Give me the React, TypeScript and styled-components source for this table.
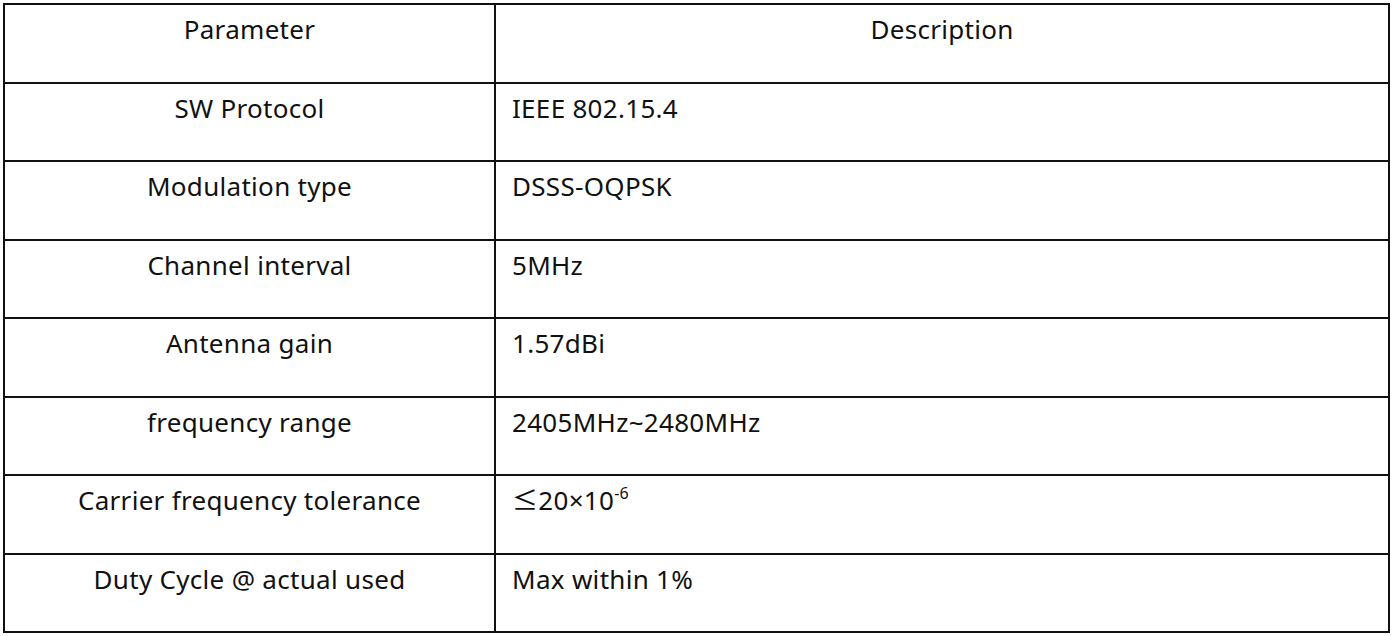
import styled, { createGlobalStyle } from 'styled-components'

const GlobalStyle = createGlobalStyle`
  html, body {
    margin: 0;
    padding: 0;
    background: #ffffff;
  }
  body {
    font-family: "Noto Sans", "Noto Sans CJK KR", sans-serif;
    color: #111111;
  }
`

const Page = styled.div`
  padding: 3px 0 0 3px;
`

const SpecTable = styled.table`
  border-collapse: collapse;
  width: 1387px;
  table-layout: fixed;

  col.param {
    width: 491px;
  }

  td, th {
    border: 2px solid #111111;
    height: 76.5px;
    padding: 0 16px;
    vertical-align: top;
    font-size: 26px;
    font-weight: 400;
    line-height: 49px;
    letter-spacing: 0.3px;
  }
`

const Cell = styled.td<{ $center?: boolean }>`
  text-align: ${p => (p.$center ? 'center' : 'left')};
`

const Sup = styled.sup`
  font-size: 16px;
  vertical-align: 0;
  position: relative;
  top: -11px;
`

interface Row {
  param: string;
  desc: React.ReactNode;
}

const rows: Row[] = [
  { param: 'SW Protocol', desc: 'IEEE 802.15.4' },
  { param: 'Modulation type', desc: 'DSSS-OQPSK' },
  { param: 'Channel interval', desc: '5MHz' },
  { param: 'Antenna gain', desc: '1.57dBi' },
  { param: 'frequency range', desc: '2405MHz~2480MHz' },
  { param: 'Carrier frequency tolerance', desc: <>≤20×10<Sup>-6</Sup></> },
  { param: 'Duty Cycle @ actual used', desc: 'Max within 1%' },
]

export default function App() {
  return (
    <Page>
      <GlobalStyle />
      <SpecTable>
        <colgroup>
          <col className="param" />
          <col />
        </colgroup>
        <tbody>
          <tr>
            <Cell $center as="th">Parameter</Cell>
            <Cell $center as="th">Description</Cell>
          </tr>
          {rows.map((r, i) => (
            <tr key={i}>
              <Cell $center>{r.param}</Cell>
              <Cell>{r.desc}</Cell>
            </tr>
          ))}
        </tbody>
      </SpecTable>
    </Page>
  )
}
